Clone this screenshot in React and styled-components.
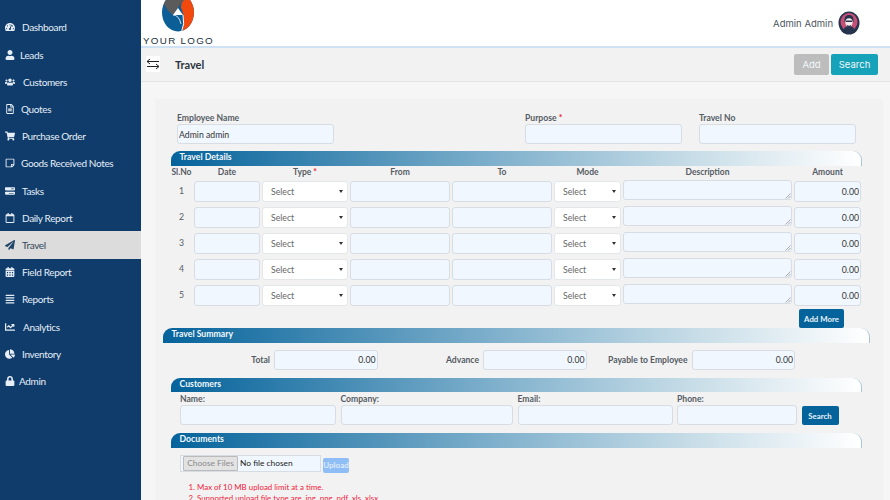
import React from "react";
import styled, { createGlobalStyle } from "styled-components";
import {
  FaTachometerAlt, FaUser, FaUsers, FaRegFileAlt, FaShoppingCart, FaRegStickyNote,
  FaRegCalendar, FaPaperPlane, FaCalendarAlt, FaAlignJustify, FaChartLine, FaChartPie, FaLock,
} from "react-icons/fa";
import { FaBarsProgress } from "react-icons/fa6";

const Global = createGlobalStyle`
  html, body { margin: 0; padding: 0; height: 500px; overflow: hidden; background: #f6f6f6; }
  * { box-sizing: border-box; }
  body { font-family: "Lato", "Noto Sans", sans-serif; }
`;

const Page = styled.div`
  display: grid;
  grid-template-columns: 141px 1fr;
  width: 890px;
  height: 500px;
  overflow: hidden;
`;

const Sidebar = styled.nav`
  background: #0f3c6b;
  padding-top: 13.9px;
  display: flex;
  flex-direction: column;
`;

const NavItem = styled.div`
  height: 27.2px;
  display: flex;
  align-items: center;
  padding-left: 5px;
  font-size: 10px;
  letter-spacing: -0.35px;
  color: ${(p) => (p.$active ? "#33475b" : "#e4eef7")};
  background: ${(p) => (p.$active ? "#dcdcdc" : "transparent")};
  svg { width: 10px; height: 10px; flex: none; color: ${(p) => (p.$active ? "#1f4468" : "#e8eef5")}; }
  span { margin-left: ${(p) => p.$gap}px; }
`;

const Main = styled.div`
  display: flex;
  flex-direction: column;
  min-width: 0;
`;

const Header = styled.header`
  height: 48px;
  background: #fff;
  border-bottom: 2px solid #cfe2f3;
  display: flex;
  justify-content: space-between;
  padding: 0 30px 0 2px;
  overflow: hidden;
`;

const LogoBlock = styled.div`
  display: flex;
  flex-direction: column;
  align-items: flex-start;
  width: 72px;
  svg { display: block; margin-left: 19px; flex: none; }
`;

const LogoText = styled.div`
  font-family: "Liberation Sans", sans-serif;
  font-size: 9.8px;
  letter-spacing: 1.3px;
  line-height: 10px;
  margin-top: 4px;
  color: #22303c;
  white-space: nowrap;
`;

const UserBox = styled.div`
  display: flex;
  align-items: center;
  gap: 5px;
  font-family: "Inter", sans-serif;
  font-size: 9.5px;
  color: #4a5560;
  height: 46px;
`;

const Toolbar = styled.div`
  height: 34px;
  background: #f2f2f2;
  border-bottom: 1px solid #e3e3e3;
  display: flex;
  align-items: center;
  padding: 0 12px 1px 5px;
`;

const BackIcon = styled.div`
  width: 14px;
  height: 16px;
  background: #fff;
  display: flex;
  align-items: center;
  justify-content: center;
`;

const PageTitle = styled.h1`
  margin: 0 0 0 15px;
  font-size: 11px;
  font-weight: 700;
  color: #2b3440;
  flex: 1;
`;

const TopButton = styled.button`
  height: 21px;
  margin-left: 2px;
  border: 0;
  border-radius: 2px;
  background: ${(p) => p.$bg};
  color: #f2f8fa;
  width: ${(p) => p.$w}px;
  font-family: "Inter", sans-serif;
  font-size: 9.5px;
  padding: 0;
`;

const Panel = styled.div`
  margin: 17px 7px 0 14px;
  padding: 0 21px 0 16px;
  background: #f2f2f2;
  flex: 1;
  min-height: 0;
`;

const Label = styled.label`
  font-size: 8.6px;
  font-weight: 700;
  color: #555c64;
  line-height: 10px;
  display: block;
  white-space: nowrap;
`;

const Req = styled.span`
  color: #e8202c;
`;

const Field = styled.input`
  display: block;
  width: 100%;
  height: ${(p) => p.$h || 20}px;
  min-width: 0;
  background: #f0f7ff;
  border: 1px solid #d7dde3;
  border-radius: 3px;
  font-family: inherit;
  font-size: 8.7px;
  color: #333;
  padding: 0 1px;
  text-align: ${(p) => (p.$right ? "right" : "left")};
  outline: none;
`;

const TopForm = styled.div`
  display: flex;
  padding: 14px 0 0 6px;
`;

const FieldGroup = styled.div`
  display: flex;
  flex-direction: column;
  gap: 1px;
`;

const TopGroup = styled(FieldGroup)`
  width: 157px;
  margin-left: ${(p) => p.$ml || 0}px;
`;

const SectionBar = styled.div`
  height: 14.5px;
  margin: ${(p) => p.$m};
  border-radius: 9px 9px 0 0;
  background: linear-gradient(90deg, #05639b 0%, #7fb0cc 47%, #c6dce7 75%, #ffffff 100%);
  border-right: 1px solid #a9c6d6;
  color: #f4f9fc;
  font-size: 8.7px;
  font-weight: 700;
  line-height: 12px;
  padding-left: 8.5px;
`;

const Cols = "21px 66px 86px 100px 100px 67px 169px 67px";

const HeadRow = styled.div`
  display: grid;
  grid-template-columns: ${Cols};
  column-gap: 2px;
  margin: 1.5px 0 4px 0;
  justify-content: start;
`;

const HeadCell = styled.div`
  font-size: 8.5px;
  font-weight: 700;
  color: #555c64;
  text-align: center;
  line-height: 10px;
  white-space: nowrap;
`;

const Row = styled.div`
  display: grid;
  grid-template-columns: ${Cols};
  column-gap: 2px;
  align-items: start;
  height: 26px;
  justify-content: start;
`;

const RowNo = styled.div`
  font-size: 8.7px;
  color: #555c64;
  text-align: center;
  line-height: 20px;
`;

const SelectBox = styled.div`
  height: 21px;
  background: #fff;
  border: 1px solid #e4e7ea;
  border-radius: 3px;
  display: flex;
  align-items: center;
  justify-content: space-between;
  padding: 0 4px 0 8px;
  font-size: 8.7px;
  color: #666;
  &::after { content: ""; border: 2.2px solid transparent; border-top: 3px solid #333; border-bottom: 0; }
`;

const TextBox = styled.div`
  position: relative;
  height: 20px;
  margin-top: -1px;
  background: #f0f7ff;
  border: 1px solid #d7dde3;
  border-radius: 3px;
  svg { position: absolute; right: 0; bottom: 0; }
`;

const MoreRow = styled.div`
  display: flex;
  justify-content: flex-end;
  padding-right: 18px;
  margin-top: -2px;
`;

const DarkButton = styled.button`
  height: 19px;
  width: ${(p) => p.$w}px;
  border: 0;
  border-radius: 2px;
  background: #05639b;
  color: #e9f3f9;
  font-family: inherit;
  font-size: 7.8px;
  font-weight: 700;
  padding: 0;
  flex: none;
`;

const SummaryRow = styled.div`
  display: flex;
  align-items: center;
  margin: 7px 0 0 0;
`;

const SummaryLabel = styled(Label)`
  width: ${(p) => p.$w}px;
  text-align: right;
  padding-right: 4px;
  flex: none;
`;

const SummaryField = styled.div`
  width: 103.5px;
  flex: none;
`;

const CustomerGrid = styled.div`
  display: grid;
  grid-template-columns: 156px 172.5px 155px 120px 37px;
  column-gap: 4.5px;
  padding: 2px 0 0 9px;
  justify-content: start;
  align-items: end;
`;

const FileRow = styled.div`
  display: flex;
  align-items: flex-end;
  gap: 2px;
  padding: 7px 0 0 9px;
`;

const FileBox = styled.div`
  width: 141px;
  height: 17px;
  background: #f0f7ff;
  border: 1px solid #d7dde3;
  display: flex;
  align-items: center;
  font-size: 8.4px;
  color: #222;
  padding-left: 2px;
`;

const ChooseBtn = styled.div`
  height: 15px;
  width: 55px;
  background: #e3e3e3;
  border: 1px solid #bbb;
  border-radius: 1px;
  color: #8a8a8a;
  font-size: 8.4px;
  text-align: center;
  line-height: 13px;
  margin-right: 2px;
  white-space: nowrap;
`;

const UploadBtn = styled.div`
  width: 26px;
  height: 15px;
  background: #8fbdf5;
  border-radius: 2px;
  color: #dcebfb;
  font-size: 8px;
  font-weight: 700;
  text-align: center;
  line-height: 15px;
  margin-bottom: -1px;
`;

const Notes = styled.ol`
  margin: 10px 0 0 0;
  padding: 0 0 0 26px;
  color: #f2213b;
  font-size: 7.9px;
  line-height: 11.5px;
`;

const nav = [
  [FaTachometerAlt, "Dashboard", 7],
  [FaUser, "Leads", 5],
  [FaUsers, "Customers", 8],
  [FaRegFileAlt, "Quotes", 6],
  [FaShoppingCart, "Purchase Order", 7],
  [FaRegStickyNote, "Goods Received Notes", 6],
  [FaBarsProgress, "Tasks", 7],
  [FaRegCalendar, "Daily Report", 7],
  [FaPaperPlane, "Travel", 7, true],
  [FaCalendarAlt, "Field Report", 7],
  [FaAlignJustify, "Reports", 7],
  [FaChartLine, "Analytics", 8],
  [FaChartPie, "Inventory", 7],
  [FaLock, "Admin", 4],
];

function Logo() {
  return (
    <svg width="32" height="32" viewBox="0 0 32 32">
      <defs>
        <clipPath id="logoClip"><ellipse cx="16" cy="12.5" rx="16" ry="19" /></clipPath>
      </defs>
      <g clipPath="url(#logoClip)">
        <rect x="0" y="0" width="32" height="32" fill="#0b5f96" />
        <path d="M0 2 L0 0 L24 0 Q18 3 16 8 L11 15 Q5 11 2 4Z" fill="#5b5b5b" />
        <path d="M22 0 Q17 5 20 10 Q24 20 20 32 L33 32 L33 0Z" fill="#f2490f" />
        <path d="M16 8 L21 15 L11 15Z" fill="#fff" />
        <path d="M21 15 Q23 24 19.5 32" fill="none" stroke="#fff" strokeWidth="1" />
        <path d="M11 15 Q17 15 19 24" fill="none" stroke="#fff" strokeWidth="0.8" />
      </g>
    </svg>
  );
}

function Avatar() {
  return (
    <svg width="22" height="24" viewBox="0 0 22 24">
      <ellipse cx="11" cy="12" rx="10.5" ry="11.5" fill="#26344d" />
      <ellipse cx="11" cy="11" rx="8.5" ry="9" fill="#c64f78" />
      <path d="M5 22 Q5 15 11 15 Q17 15 17 22Z" fill="#26344d" />
      <path d="M6.5 9 Q6.5 4 11 4 Q15.5 4 15.5 9 L15.5 11 L6.5 11Z" fill="#26344d" />
      <ellipse cx="11" cy="11.5" rx="3.6" ry="4.2" fill="#f6ecea" />
      <path d="M8 9.5 L14 9.5 L14 11 L8 11Z" fill="#26344d" />
      <path d="M8.5 13.5 Q11 16 13.5 13.5 L12.5 16 L9.5 16Z" fill="#26344d" />
    </svg>
  );
}

function BackArrows() {
  return (
    <svg width="14" height="12" viewBox="0 0 14 12" fill="none" stroke="#222" strokeWidth="1">
      <path d="M13 3.5H1M4 1L1 3.5L4 6" />
      <path d="M1 8.5H13M10 6L13 8.5L10 11" />
    </svg>
  );
}

function Grip() {
  return (
    <svg width="6" height="6" viewBox="0 0 6 6" stroke="#888" strokeWidth="0.7">
      <path d="M0.5 5.5L5.5 0.5M3 5.5L5.5 3" />
    </svg>
  );
}

export default function App() {
  return (
    <Page>
      <Global />
      <Sidebar>
        {nav.map(([Icon, label, gap, active]) => (
          <NavItem key={label} $gap={gap} $active={active}>
            <Icon />
            <span>{label}</span>
          </NavItem>
        ))}
      </Sidebar>
      <Main>
        <Header>
          <LogoBlock>
            <Logo />
            <LogoText>YOUR LOGO</LogoText>
          </LogoBlock>
          <UserBox>
            Admin Admin
            <Avatar />
          </UserBox>
        </Header>
        <Toolbar>
          <BackIcon><BackArrows /></BackIcon>
          <PageTitle>Travel</PageTitle>
          <TopButton $bg="#bdbdbd" $w={35}>Add</TopButton>
          <TopButton $bg="#16a2b8" $w={47}>Search</TopButton>
        </Toolbar>
        <Panel>
          <TopForm>
            <TopGroup><Label>Employee Name</Label><Field defaultValue="Admin admin" /></TopGroup>
            <TopGroup $ml={191}><Label>Purpose <Req>*</Req></Label><Field /></TopGroup>
            <TopGroup $ml={17}><Label>Travel No</Label><Field /></TopGroup>
          </TopForm>
          <SectionBar $m="7px 0 0 0">Travel Details</SectionBar>
          <HeadRow>
            <HeadCell>Sl.No</HeadCell>
            <HeadCell>Date</HeadCell>
            <HeadCell>Type <Req>*</Req></HeadCell>
            <HeadCell>From</HeadCell>
            <HeadCell>To</HeadCell>
            <HeadCell>Mode</HeadCell>
            <HeadCell>Description</HeadCell>
            <HeadCell>Amount</HeadCell>
          </HeadRow>
          {[1, 2, 3, 4, 5].map((n) => (
            <Row key={n}>
              <RowNo>{n}</RowNo>
              <Field $h={21} />
              <SelectBox>Select</SelectBox>
              <Field $h={21} />
              <Field $h={21} />
              <SelectBox>Select</SelectBox>
              <TextBox><Grip /></TextBox>
              <Field $h={21} $right defaultValue="0.00" />
            </Row>
          ))}
          <MoreRow><DarkButton $w={45}>Add More</DarkButton></MoreRow>
          <SectionBar $m="0 -8px">Travel Summary</SectionBar>
          <SummaryRow>
            <SummaryLabel $w={103}>Total</SummaryLabel>
            <SummaryField><Field $right defaultValue="0.00" /></SummaryField>
            <SummaryLabel $w={105.5}>Advance</SummaryLabel>
            <SummaryField><Field $right defaultValue="0.00" /></SummaryField>
            <SummaryLabel $w={105}>Payable to Employee</SummaryLabel>
            <SummaryField><Field $right defaultValue="0.00" /></SummaryField>
          </SummaryRow>
          <SectionBar $m="8px 0 0 0">Customers</SectionBar>
          <CustomerGrid>
            <FieldGroup><Label>Name:</Label><Field /></FieldGroup>
            <FieldGroup><Label>Company:</Label><Field /></FieldGroup>
            <FieldGroup><Label>Email:</Label><Field /></FieldGroup>
            <FieldGroup><Label>Phone:</Label><Field /></FieldGroup>
            <DarkButton $w={37}>Search</DarkButton>
          </CustomerGrid>
          <SectionBar $m="8px 0 0 0">Documents</SectionBar>
          <FileRow>
            <FileBox><ChooseBtn>Choose Files</ChooseBtn>No file chosen</FileBox>
            <UploadBtn>Upload</UploadBtn>
          </FileRow>
          <Notes>
            <li>Max of 10 MB upload limit at a time.</li>
            <li>Supported upload file type are .jpg .png .pdf .xls .xlsx</li>
          </Notes>
        </Panel>
      </Main>
    </Page>
  );
}
